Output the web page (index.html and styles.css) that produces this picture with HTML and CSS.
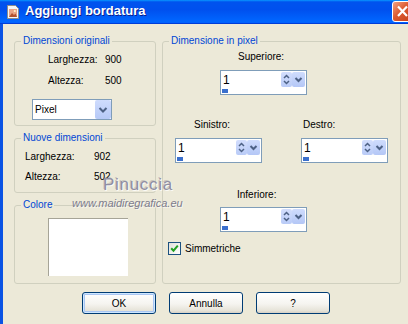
FILE: index.html
```
<!doctype html>
<html>
<head>
<meta charset='utf-8' />
<title>Aggiungi bordatura</title>
<link rel="stylesheet" href="styles.css">
</head>
<body>
<div class="win">
	<div class="caption">
		<svg class="appicon" width="16" height="16" viewBox="0 0 16 16">
			<path d="M2.5 1.5h8l3 3v10h-11z" fill="#f6f6f6" stroke="#8c8c8c"/>
			<rect x="4" y="5" width="8" height="8" fill="#eaa485"/>
			<path d="M4 13l3-4 2 2 1.5-1.5 1.5 3.5z" fill="#b4532f"/>
			<circle cx="9.8" cy="7" r="1.1" fill="#fff3c8"/>
		</svg>
		<span class="title">Aggiungi bordatura</span>
		<span class="close"><svg width="19" height="19" viewBox="0 0 19 19"><path d="M5 4.5l9 9.5M14 4.5l-9 9.5" stroke="#fff" stroke-width="2.2"/></svg></span>
	</div>
	<div class="client">
		<div class="panes">
			<div class="col">
				<fieldset class="grp orig">
					<legend>Dimensioni originali</legend>
					<div class="dims">
						<span>Larghezza:</span><span>900</span>
						<span>Altezza:</span><span>500</span>
					</div>
					<div class="combo"><span>Pixel</span><span class="dd"><svg width="16" height="19" viewBox="0 0 16 19"><path d="M4.5 8l3.5 3.5 3.5-3.5" fill="none" stroke="#4d6185" stroke-width="2"/></svg></span></div>
				</fieldset>
				<fieldset class="grp nuove">
					<legend>Nuove dimensioni</legend>
					<div class="dims">
						<span>Larghezza:</span><span>902</span>
						<span>Altezza:</span><span>502</span>
					</div>
				</fieldset>
				<fieldset class="grp colore">
					<legend>Colore</legend>
					<div class="swatch"></div>
				</fieldset>
			</div>
			<fieldset class="grp pixel">
				<legend>Dimensione in pixel</legend>
				<div class="lbl sup">Superiore:</div>
				<div class="spin top">
					<div class="field"><span class="val">1</span><span class="ud"><svg width="11" height="15" viewBox="0 0 11 15"><path d="M3 6l2.5-2.5L8 6M3 9l2.5 2.5L8 9" fill="none" stroke="#4d6185" stroke-width="1.5"/></svg></span><span class="sd"><svg width="13" height="15" viewBox="0 0 13 15"><path d="M3.5 6l3 3 3-3" fill="none" stroke="#4d6185" stroke-width="2"/></svg></span></div>
					<div class="track"><i></i></div>
				</div>
				<div class="lr">
					<div class="side">
						<div class="lbl sin">Sinistro:</div>
						<div class="spin">
							<div class="field"><span class="val">1</span><span class="ud"><svg width="11" height="15" viewBox="0 0 11 15"><path d="M3 6l2.5-2.5L8 6M3 9l2.5 2.5L8 9" fill="none" stroke="#4d6185" stroke-width="1.5"/></svg></span><span class="sd"><svg width="13" height="15" viewBox="0 0 13 15"><path d="M3.5 6l3 3 3-3" fill="none" stroke="#4d6185" stroke-width="2"/></svg></span></div>
							<div class="track"><i></i></div>
						</div>
					</div>
					<div class="side">
						<div class="lbl des">Destro:</div>
						<div class="spin">
							<div class="field"><span class="val">1</span><span class="ud"><svg width="11" height="15" viewBox="0 0 11 15"><path d="M3 6l2.5-2.5L8 6M3 9l2.5 2.5L8 9" fill="none" stroke="#4d6185" stroke-width="1.5"/></svg></span><span class="sd"><svg width="13" height="15" viewBox="0 0 13 15"><path d="M3.5 6l3 3 3-3" fill="none" stroke="#4d6185" stroke-width="2"/></svg></span></div>
							<div class="track"><i></i></div>
						</div>
					</div>
				</div>
				<div class="lbl inf">Inferiore:</div>
				<div class="spin bottom">
					<div class="field"><span class="val">1</span><span class="ud"><svg width="11" height="15" viewBox="0 0 11 15"><path d="M3 6l2.5-2.5L8 6M3 9l2.5 2.5L8 9" fill="none" stroke="#4d6185" stroke-width="1.5"/></svg></span><span class="sd"><svg width="13" height="15" viewBox="0 0 13 15"><path d="M3.5 6l3 3 3-3" fill="none" stroke="#4d6185" stroke-width="2"/></svg></span></div>
					<div class="track"><i></i></div>
				</div>
				<div class="check"><span class="box"><svg width="11" height="11" viewBox="0 0 11 11"><path d="M2.2 5.2l2.3 2.5 4.3-5" fill="none" stroke="#21a121" stroke-width="2"/></svg></span>Simmetriche</div>
			</fieldset>
		</div>
		<div class="buttons">
			<button class="btn def">OK</button>
			<button class="btn">Annulla</button>
			<button class="btn">?</button>
		</div>
		<!-- watermark stamped over the dialog -->
		<div class="mark"><span class="name">Pinuccia</span><span class="site">www.maidiregrafica.eu</span></div>
	</div>
</div>
</body>
</html>
```
FILE: styles.css
```
*{margin:0;padding:0;box-sizing:border-box;}
html,body{height:324px;overflow:hidden;}
body{background:#ece9d8;font:10px "Liberation Sans",Arial,sans-serif;color:#000;}
.win{width:411px;}

/* title bar */
.caption{height:24px;display:flex;align-items:flex-start;color:#fff;
	background:linear-gradient(180deg,#0997ff,#0053ee 8%,#0050ee 40%,#06f 88%,#06f 93%,#005bff 95%,#003dd7 96%,#003dd7);}
.appicon{flex:none;margin:4px 4px 0 5px;}
.title{margin-top:1px;font:bold 13px/20px "Liberation Sans",Arial,sans-serif;text-shadow:1px 1px 0 #0a1f8f;}
.close{display:flex;align-items:center;justify-content:center;width:21px;height:21px;margin:1px -2px 0 auto;
	border:1px solid #fff;border-radius:3px;background:linear-gradient(135deg,#f3a283,#dc5a31 45%,#c43f17);}

.client{position:relative;height:300px;border-left:3px solid #0a53e4;padding:11px 10px 0 11px;}
.panes{display:grid;grid-template-columns:142px 1fr;column-gap:6px;}
.col{display:flex;flex-direction:column;gap:6px;}

/* group boxes */
.grp{border:1px solid #d0d0bf;border-radius:3px;min-width:0;}
.grp legend{margin-left:6px;padding:0 2px;line-height:12px;color:#0046d5;}
.dims{display:grid;grid-template-columns:57px auto;row-gap:9px;margin:7px 0 0 33px;line-height:12px;}
.orig{padding-bottom:5px;}
.nuove{padding-bottom:9px;}
.nuove .dims{grid-template-columns:69px auto;row-gap:8px;margin-left:10px;}
.colore{padding-bottom:7px;}
.swatch{width:80px;height:58px;margin:7px 0 0 33px;background:#fff;border-top:1px solid #a6a497;border-left:1px solid #a6a497;}

.combo{display:flex;width:80px;height:21px;margin:12px 0 0 17px;padding-left:2px;border:1px solid #7f9db9;background:#fff;line-height:19px;}
.combo .dd{margin-left:auto;width:16px;height:19px;border-radius:2px;background:linear-gradient(#cfdcfd,#b6c9f7);}
.combo svg,.spin svg{display:block;}

/* spinners */
.spin{width:87px;border:1px solid #7f9db9;background:#fff;}
.spin .field{display:flex;height:17px;padding:1px 1px 0 2px;}
.spin .val{flex:1;font-size:12px;line-height:16px;}
.spin .ud{width:11px;height:15px;border-radius:2px;background:linear-gradient(#d3defd,#b9cbf7);}
.spin .sd{width:13px;height:15px;border-radius:2px;background:linear-gradient(#cfdcfd,#b4c7f6);}
.spin .track{height:6px;padding:1px 0 0 1px;}
.spin .track i{display:block;width:6px;height:4px;background:#3a6fcd;}

.lbl{line-height:12px;}
.sup{margin-top:4px;padding-left:75px;}
.spin.top{margin:7px 0 0 57px;}
.lr{display:flex;gap:39px;margin:24px 0 0 12px;}
.sin{padding-left:19px;}
.des{padding-left:2px;}
.side .spin{margin-top:7px;}
.inf{margin-top:26px;padding-left:74px;}
.spin.bottom{margin:6px 0 0 57px;}
.check{display:flex;align-items:center;gap:4px;margin:10px 0 0 5px;line-height:12px;}
.check .box{display:flex;align-items:center;justify-content:center;width:13px;height:13px;border:1px solid #1c5180;background:linear-gradient(135deg,#e0e0d9,#fff);}

/* buttons */
.buttons{display:flex;justify-content:center;gap:13px;margin:8px 3px 0 0;}
.btn{width:74px;height:22px;font:10px "Liberation Sans",Arial,sans-serif;color:#000;border:1px solid #003c74;border-radius:3px;
	background:linear-gradient(#fff,#f5f4ef 55%,#e6e3d8 88%,#d6d0c5);}
.btn.def{box-shadow:inset 0 0 0 1px #cee7ff,inset 0 0 0 2px #a9c6f3;}

.mark{position:absolute;left:69px;top:152px;pointer-events:none;}
.name{display:block;margin-left:31px;font-size:17px;line-height:17px;letter-spacing:.7px;color:#908ea3;
	text-shadow:1px 1px 0 rgba(255,255,255,.8),-1px -1px 0 rgba(90,90,110,.25);}
.site{display:block;margin-top:4px;font-size:11px;line-height:13px;font-style:italic;color:#7d7c8c;
	text-shadow:1px 1px 0 rgba(255,255,255,.6);}
```
